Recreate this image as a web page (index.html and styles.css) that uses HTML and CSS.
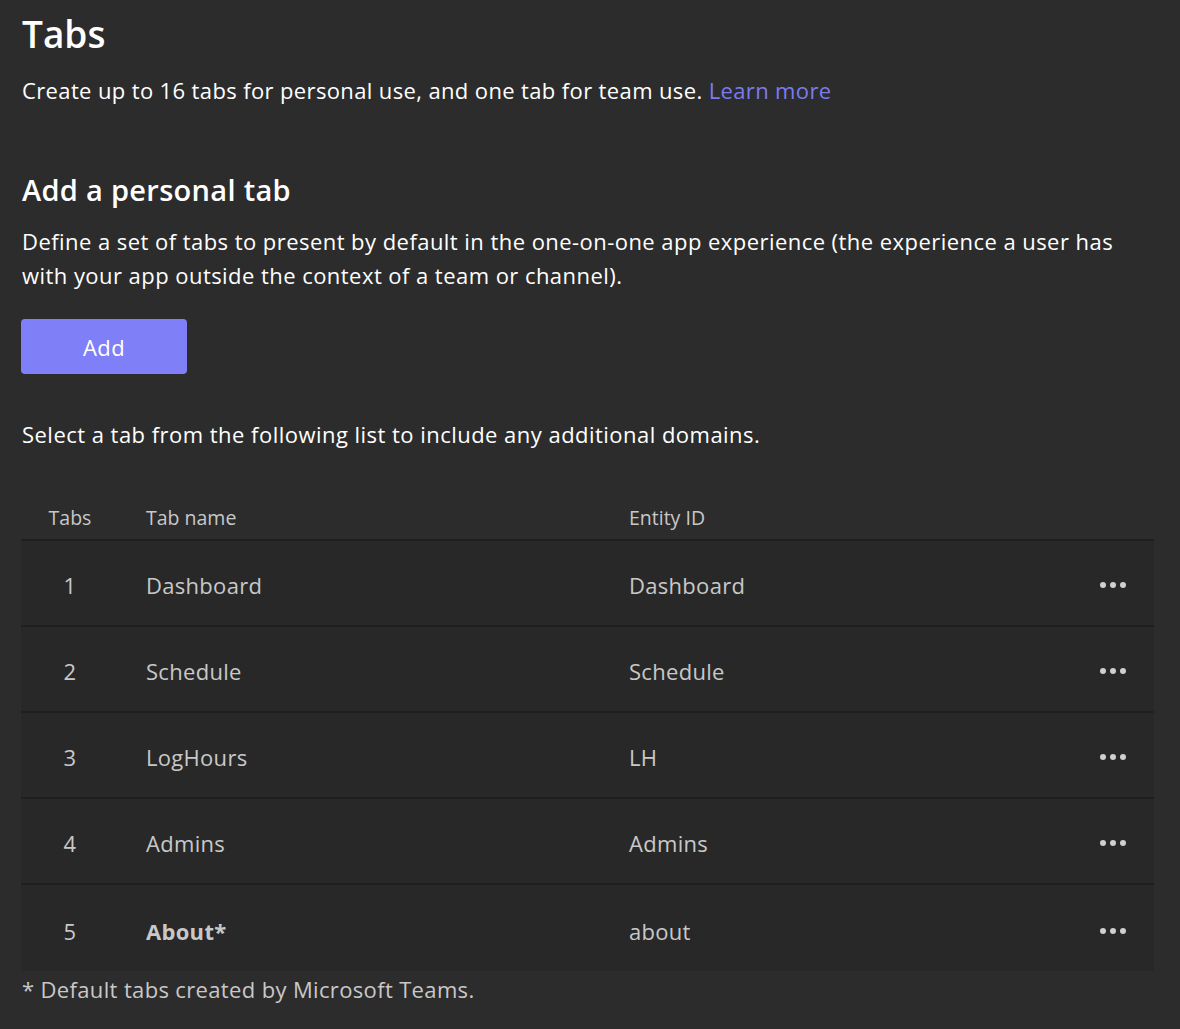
FILE: index.html
```html
<!DOCTYPE html>
<html lang="en">
<head>
<meta charset="utf-8">
<title>Tabs</title>
<link rel="stylesheet" href="styles.css">
</head>
<body>
<main class="page">
  <h1 class="title">Tabs</h1>
  <p class="lead">Create up to 16 tabs for personal use, and one tab for team use. <a class="link" href="#">Learn more</a></p>

  <h2 class="subtitle">Add a personal tab</h2>
  <p class="desc">Define a set of tabs to present by default in the one-on-one app experience (the experience a user has with your app outside the context of a team or channel).</p>
  <button class="btn-primary" type="button">Add</button>

  <p class="select-note">Select a tab from the following list to include any additional domains.</p>

  <div class="table">
    <div class="row head">
      <div class="cell num">Tabs</div>
      <div class="cell">Tab name</div>
      <div class="cell">Entity ID</div>
      <div class="cell"></div>
    </div>
    <div class="row">
      <div class="cell num">1</div>
      <div class="cell">Dashboard</div>
      <div class="cell">Dashboard</div>
      <div class="cell more"><span class="dot"></span><span class="dot"></span><span class="dot"></span></div>
    </div>
    <div class="row">
      <div class="cell num">2</div>
      <div class="cell">Schedule</div>
      <div class="cell">Schedule</div>
      <div class="cell more"><span class="dot"></span><span class="dot"></span><span class="dot"></span></div>
    </div>
    <div class="row">
      <div class="cell num">3</div>
      <div class="cell">LogHours</div>
      <div class="cell">LH</div>
      <div class="cell more"><span class="dot"></span><span class="dot"></span><span class="dot"></span></div>
    </div>
    <div class="row">
      <div class="cell num">4</div>
      <div class="cell">Admins</div>
      <div class="cell">Admins</div>
      <div class="cell more"><span class="dot"></span><span class="dot"></span><span class="dot"></span></div>
    </div>
    <div class="row last">
      <div class="cell num">5</div>
      <div class="cell bold">About*</div>
      <div class="cell">about</div>
      <div class="cell more"><span class="dot"></span><span class="dot"></span><span class="dot"></span></div>
    </div>
  </div>
  <p class="footnote">* Default tabs created by Microsoft Teams.</p>
</main>
</body>
</html>
```
FILE: styles.css
```css
html, body {
  margin: 0;
  padding: 0;
  background: #2c2c2c;
}
body {
  font-family: "Segoe UI", "Open Sans", "Noto Sans", sans-serif;
  color: #ffffff;
}
.page {
  padding: 6px 26px 0 21px;
}
.title {
  margin: 0 0 0 1px;
  font-size: 37px;
  font-weight: 600;
  line-height: 56px;
}
.lead {
  margin: 11px 0 0 1px;
  font-size: 22px;
  line-height: 34px;
  letter-spacing: 0.37px;
}
.link {
  color: #7b7bef;
  text-decoration: none;
}
.subtitle {
  margin: 65px 0 0 1px;
  font-size: 29px;
  font-weight: 600;
  line-height: 36px;
  letter-spacing: 0.3px;
}
.desc {
  margin: 16px 0 0 1px;
  font-size: 22px;
  line-height: 34px;
  letter-spacing: 0.45px;
}
.btn-primary {
  display: block;
  margin-top: 27px;
  width: 166px;
  height: 55px;
  border: none;
  border-radius: 4px;
  background: #7f7ff7;
  color: #ffffff;
  font-family: inherit;
  font-size: 22px;
  letter-spacing: 0.4px;
  cursor: pointer;
}
.select-note {
  margin: 43px 0 0 1px;
  font-size: 22px;
  line-height: 34px;
  letter-spacing: 0.47px;
}
.table {
  margin-top: 48px;
  width: 1133px;
}
.row {
  box-sizing: border-box;
  display: grid;
  grid-template-columns: 98px 483px 1fr 54px;
  column-gap: 0;
  align-items: center;
  height: 86px;
  padding-top: 4px;
  background: #282828;
  border-top: 2px solid #1f1f1f;
  color: #c8c8c8;
  font-size: 22px;
  letter-spacing: 0.3px;
}
.row.head {
  height: 40px;
  padding-top: 5px;
  background: transparent;
  border-top: none;
  align-items: start;
  font-size: 19.5px;
  letter-spacing: 0;
}
.row.last {
  height: 88px;
  padding-top: 5px;
}
.row .cell:nth-child(2) {
  padding-left: 27px;
}
.row .cell:nth-child(3) {
  padding-left: 27px;
}
.cell.num {
  text-align: center;
}
.cell.bold {
  font-weight: 700;
}
.more {
  display: flex;
  gap: 4px;
  align-items: center;
}
.dot {
  width: 6px;
  height: 6px;
  border-radius: 50%;
  background: #d0d0d0;
}
.footnote {
  margin: 1px 0 0 1px;
  font-size: 22px;
  line-height: 34px;
  letter-spacing: 0.35px;
  color: #c8c8c8;
}
```
